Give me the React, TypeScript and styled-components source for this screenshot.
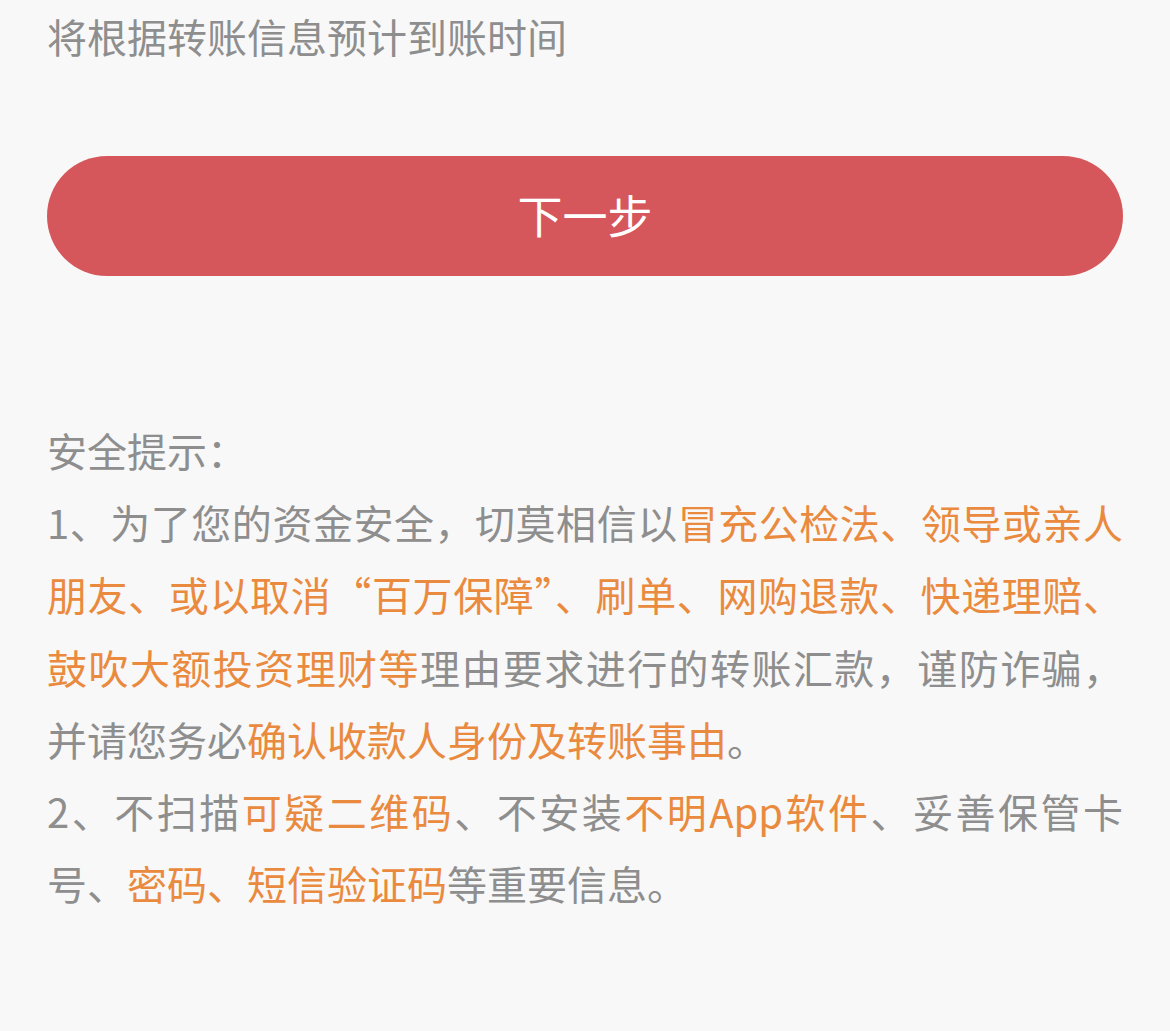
import React from "react";
import styled, { createGlobalStyle } from "styled-components";

const Global = createGlobalStyle`
  html, body {
    margin: 0;
    padding: 0;
    background: #f8f8f8;
  }
  body {
    font-family: "Noto Sans CJK SC", "Noto Sans", sans-serif;
  }
`;

const Page = styled.div`
  box-sizing: border-box;
  width: 1170px;
  min-height: 1031px;
  padding: 0 47px;
  background: #f8f8f8;
  display: flex;
  flex-direction: column;
`;

const Hint = styled.div`
  font-size: 40px;
  line-height: 72px;
  color: #8e8e8e;
`;

const NextButton = styled.button`
  margin-top: 84px;
  height: 120px;
  width: 100%;
  border: none;
  border-radius: 60px;
  background: #d6575b;
  color: #ffffff;
  font-family: "Noto Sans CJK SC", "Noto Sans", sans-serif;
  font-size: 45px;
  display: flex;
  align-items: center;
  justify-content: center;
  padding: 0 0 4px 0;
  cursor: pointer;
`;

const Notice = styled.div`
  margin-top: 138px;
  font-size: 40px;
  line-height: 72.2px;
  color: #8e8e8e;
  text-align: justify;
`;

const Line = styled.p`
  margin: 0;
`;

const Em = styled.span`
  color: #ea8a3e;
`;

export default function App() {
  return (
    <>
      <Global />
      <Page>
        <Hint>将根据转账信息预计到账时间</Hint>
        <NextButton>下一步</NextButton>
        <Notice>
          <Line>安全提示：</Line>
          <Line>
            1、为了您的资金安全，切莫相信以<Em>冒充公检法、领导或亲人朋友、或以取消“百万保障”、刷单、网购退款、快递理赔、鼓吹大额投资理财等</Em>理由要求进行的转账汇款，谨防诈骗，并请您务必<Em>确认收款人身份及转账事由</Em>。
          </Line>
          <Line>
            2、不扫描<Em>可疑二维码</Em>、不安装<Em>不明App软件</Em>、妥善保管卡号、<Em>密码、短信验证码</Em>等重要信息。
          </Line>
        </Notice>
      </Page>
    </>
  );
}
